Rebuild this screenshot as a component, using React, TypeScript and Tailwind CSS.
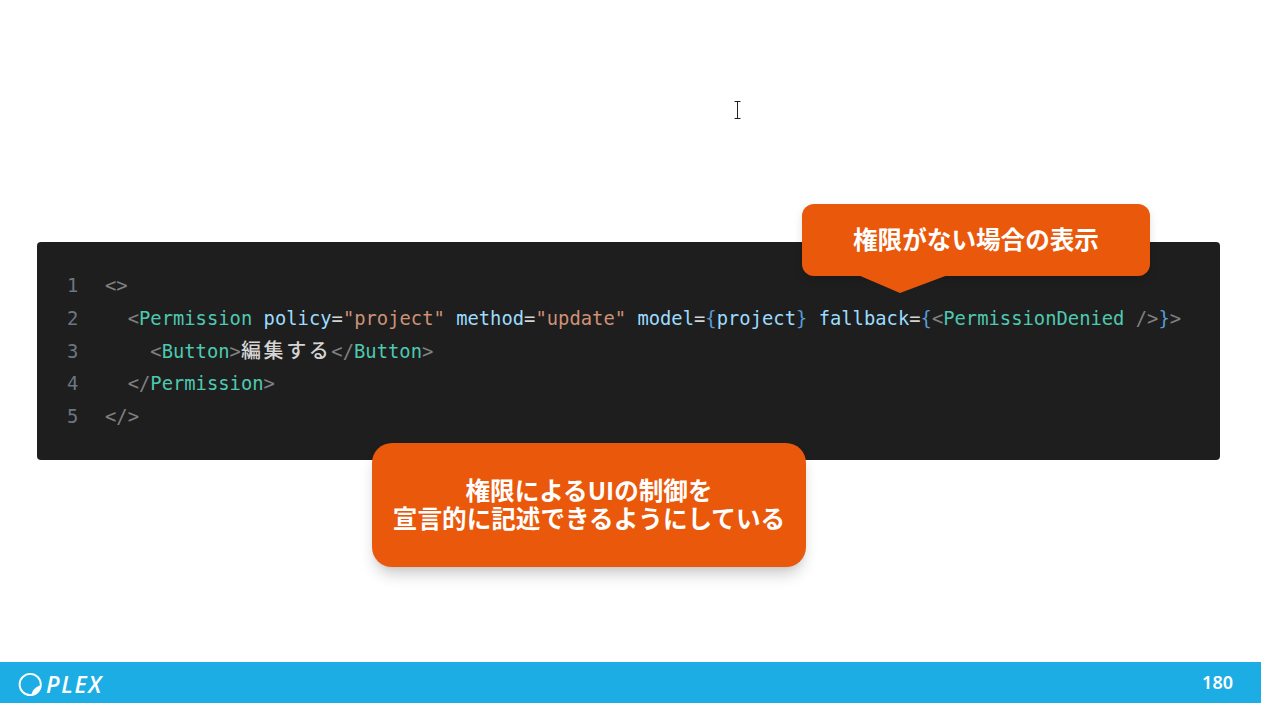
import React from "react";

const T = ({ c }: { c: string }) => <span className="text-[#4ec9b0]">{c}</span>;
const P = ({ c }: { c: string }) => <span className="text-[#808080]">{c}</span>;
const A = ({ c }: { c: string }) => <span className="text-[#9cdcfe]">{c}</span>;
const S = ({ c }: { c: string }) => <span className="text-[#ce9178]">{c}</span>;
const B = ({ c }: { c: string }) => <span className="text-[#569cd6]">{c}</span>;
const E = ({ c }: { c: string }) => <span className="text-[#d4d4d4]">{c}</span>;

const lines: React.ReactNode[] = [
  <P c="<>" />,
  <>
    {"  "}
    <P c="<" />
    <T c="Permission" /> <A c="policy" />
    <E c="=" />
    <S c={'"project"'} /> <A c="method" />
    <E c="=" />
    <S c={'"update"'} /> <A c="model" />
    <E c="=" />
    <B c="{" />
    <A c="project" />
    <B c="}" /> <A c="fallback" />
    <E c="=" />
    <B c="{" />
    <P c="<" />
    <T c="PermissionDenied" /> <P c="/>" />
    <B c="}" />
    <P c=">" />
  </>,
  <>
    {"    "}
    <P c="<" />
    <T c="Button" />
    <P c=">" />
    <span className="font-['Noto_Sans_CJK_JP',sans-serif] text-[20px] font-medium leading-none tracking-[2.6px] text-[#d4d4d4]">編集する</span>
    <P c="</" />
    <T c="Button" />
    <P c=">" />
  </>,
  <>
    {"  "}
    <P c="</" />
    <T c="Permission" />
    <P c=">" />
  </>,
  <P c="</>" />,
];

export default function App() {
  return (
    <div className="relative flex h-[703px] w-full flex-col overflow-hidden bg-white">
      <main className="flex-1 px-[37px] pt-[242px]">
        <div className="h-[218px] w-[1183px] rounded-[4px] bg-[#1e1e1e] pl-[30px] pt-[28.4px] font-['DejaVu_Sans_Mono',monospace] text-[18.82px] leading-[32.6px]">
          {lines.map((line, i) => (
            <div key={i} className="flex h-[32.6px] whitespace-pre">
              <span className="w-[38px] text-[#6e7681]">{i + 1}</span>
              <span>{line}</span>
            </div>
          ))}
        </div>
      </main>

      <footer className="flex h-[41px] items-center justify-between bg-[#1cade4] pl-[18px] pr-[28px] text-white">
        <div className="mt-[4px] flex items-center gap-[3px]">
          <svg width="25" height="25" viewBox="0 0 25 25" fill="none">
            <circle cx="12.2" cy="12.5" r="10.6" stroke="#fff" strokeWidth="1.9" />
            <path d="M22.8 13.5 A10.6 10.6 0 0 1 13.5 23.1 C14 18.5 17.5 14.5 22.8 13.5Z" fill="#fff" />
          </svg>
          <span className="font-['Open_Sans',sans-serif] text-[23px] font-semibold italic leading-none tracking-[1.7px]">PLEX</span>
        </div>
        <span className="font-['Noto_Sans',sans-serif] text-[18px] font-semibold">180</span>
      </footer>

      <div className="absolute left-[802px] top-[204px] flex h-[71.5px] w-[348px] items-center justify-center rounded-[12px] bg-[#ea580c] pb-[3px] font-['Noto_Sans_CJK_JP',sans-serif] text-[24.6px] font-bold text-white shadow-[0_4px_10px_rgba(0,0,0,0.12)]">
        権限がない場合の表示
        <svg className="absolute left-[56px] top-[70.5px]" width="90" height="18" viewBox="0 0 90 18">
          <path d="M0 0H90L42 18Z" fill="#ea580c" />
        </svg>
      </div>

      <div className="absolute left-[372px] top-[443px] flex h-[124px] w-[434px] items-center justify-center rounded-[20px] bg-[#ea580c] pb-[5px] text-center font-['Noto_Sans_CJK_JP',sans-serif] text-[24.6px] font-bold leading-[28px] text-white shadow-[0_10px_15px_-3px_rgba(0,0,0,0.2),0_4px_6px_-4px_rgba(0,0,0,0.1)]">
        <div>
          権限によるUIの制御を
          <br />
          宣言的に記述できるようにしている
        </div>
      </div>

      <svg className="absolute left-[733px] top-[100px]" width="9" height="20" viewBox="0 0 9 20" fill="none">
        <path d="M1.5 1.5H7.5M4.5 1.5V18.5M1.5 18.5H7.5" stroke="#222" strokeWidth="1" />
      </svg>
    </div>
  );
}
